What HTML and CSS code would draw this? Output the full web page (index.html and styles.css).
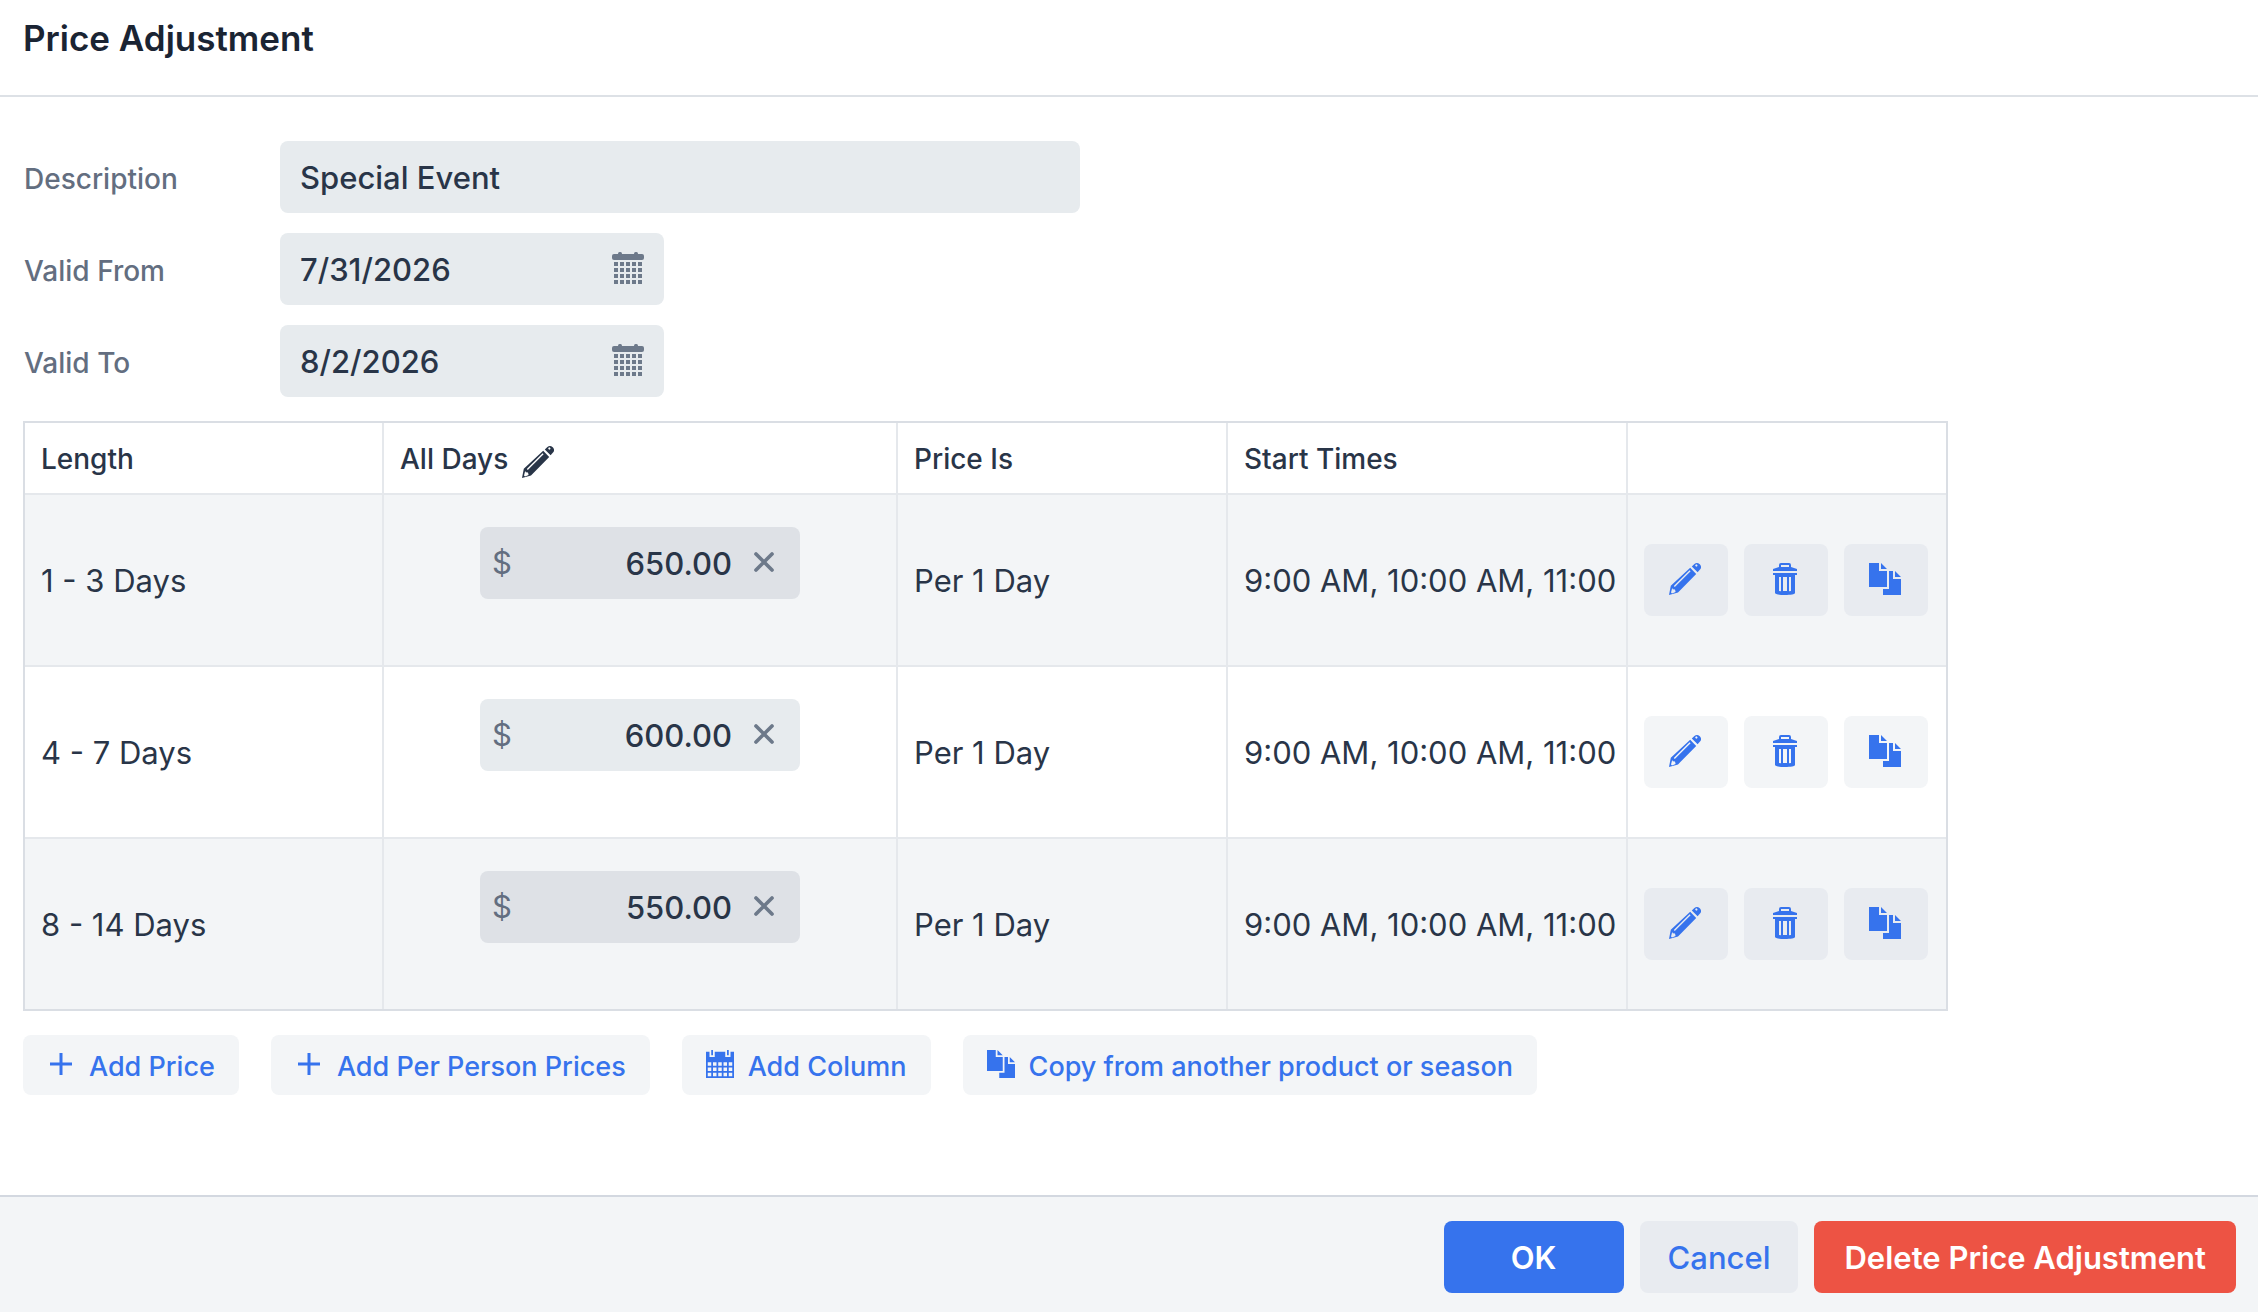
FILE: index.html
```
<!DOCTYPE html>
<html lang="en">
<head>
  <meta charset="UTF-8">
  <meta name="viewport" content="width=device-width, initial-scale=1">
  <title>Price Adjustment</title>
  <link rel="stylesheet" href="styles.css">
</head>
<body>
  <!-- Icon sprite -->
  <svg class="sprite" aria-hidden="true">
    <symbol id="icon-pencil" viewBox="0 0 16 16">
      <path fill-rule="evenodd" d="M11.4 1.7L12.7.5C13.4-.1 14.5-.2 15.2.5l.3.3c.7.8.7 1.8 0 2.5l-1.2 1.3zM13.3.9a.5.5 0 1 0 .8.7.5.5 0 0 0-.8-.7z"/>
      <path fill-rule="evenodd" d="M10.6 2.4l3 3.1L4.5 14.700 0 16l.9-4.600zM10.300 3.600L2.400 11.500l.5.5L10.800 4.100zM1.600 12.500L1 14.700l.5.5 1.800-.7-.3-1.200-1.100-.2z"/>
    </symbol>
    <symbol id="icon-trash" viewBox="0 0 16 16">
      <path fill-rule="evenodd" d="M2 3l3-1V1a1 1 0 0 1 1-1h4a1 1 0 0 1 1 1v1l3 1v1H2zM6 1v1h4V1z"/>
      <path fill-rule="evenodd" d="M2 5h12v1h-1v9c0 .6-2.200 1-5 1s-5-.4-5-1V6H2zm3 2v7l1 .1V7zm2 0v7h2V7zm3 0v7.100l1-.1V7z"/>
    </symbol>
    <symbol id="icon-copy" viewBox="0 0 16 16">
      <path d="M0 0h5v4h4v8H0zM6 0l3 3H6zM10 4h2v4h4v8H7v-3h3zM13 4l3 3h-3z"/>
    </symbol>
    <symbol id="icon-calendar" viewBox="0 0 16 16">
      <path d="M3 0h1v3H3zM12 0h1v3h-1z"/>
      <path fill-rule="evenodd" d="M0 1h2v3h3V1h6v3h3V1h2v15H0zM1 7v2h2V7zm3 0v2h2V7zm3 0v2h2V7zm3 0v2h2V7zm3 0v2h2V7zM1 10v2h2v-2zm3 0v2h2v-2zm3 0v2h2v-2zm3 0v2h2v-2zm3 0v2h2v-2zM1 13v2h2v-2zm3 0v2h2v-2zm3 0v2h2v-2zm3 0v2h2v-2zm3 0v2h2v-2z"/>
    </symbol>
    <symbol id="icon-plus" viewBox="0 0 28 28">
      <path d="M12.500 3h3v9.500H25v3h-9.500V25h-3v-9.500H3v-3h9.500z"/>
    </symbol>
    <symbol id="icon-cross" viewBox="0 0 20 20">
      <path d="M2 2l16 16M18 2L2 18" fill="none" stroke="currentColor" stroke-width="3.700" stroke-linecap="round"/>
    </symbol>
    <symbol id="icon-date" viewBox="0 0 32 32">
      <rect x="0" y="2" width="32" height="6" rx="2"/>
      <rect x="6" y="0" width="4" height="4" rx="1.500"/>
      <rect x="22" y="0" width="4" height="4" rx="1.500"/>
      <path d="M4 10v22M10 10v22M16 10v22M22 10v22M28 10v22" fill="none" stroke="currentColor" stroke-width="4" stroke-dasharray="4 2"/>
    </symbol>
  </svg>

  <div class="dialog">
    <header class="dialog-header">
      <h2>Price Adjustment</h2>
    </header>

    <main class="dialog-content">
      <div class="form">
        <label for="description">Description</label>
        <div class="field field-wide">
          <input type="text" id="description" value="Special Event">
        </div>

        <label for="valid-from">Valid From</label>
        <div class="field">
          <input type="text" id="valid-from" value="7/31/2026">
          <button class="field-button" aria-label="Choose start date"><svg class="icon-date"><use href="#icon-date"/></svg></button>
        </div>

        <label for="valid-to">Valid To</label>
        <div class="field">
          <input type="text" id="valid-to" value="8/2/2026">
          <button class="field-button" aria-label="Choose end date"><svg class="icon-date"><use href="#icon-date"/></svg></button>
        </div>
      </div>

      <table class="prices">
        <colgroup>
          <col class="col-length">
          <col class="col-price">
          <col class="col-unit">
          <col class="col-times">
          <col class="col-actions">
        </colgroup>
        <thead>
          <tr>
            <th>Length</th>
            <th>
              <div class="column-title">All Days
                <button class="header-button" aria-label="Edit column"><svg class="icon"><use href="#icon-pencil"/></svg></button>
              </div>
            </th>
            <th>Price Is</th>
            <th>Start Times</th>
            <th></th>
          </tr>
        </thead>
        <tbody>
          <tr>
            <td>1 - 3 Days</td>
            <td class="price-cell">
              <div class="field price-field">
                <span class="prefix">$</span>
                <input type="text" value="650.00" aria-label="Price for 1 - 3 days">
                <button class="field-button" aria-label="Clear"><svg class="icon-cross"><use href="#icon-cross"/></svg></button>
              </div>
            </td>
            <td>Per 1 Day</td>
            <td class="times">9:00 AM, 10:00 AM, 11:00</td>
            <td class="actions-cell">
              <div class="actions">
                <button class="btn btn-icon" aria-label="Edit"><svg class="icon"><use href="#icon-pencil"/></svg></button>
                <button class="btn btn-icon" aria-label="Delete"><svg class="icon"><use href="#icon-trash"/></svg></button>
                <button class="btn btn-icon" aria-label="Copy"><svg class="icon"><use href="#icon-copy"/></svg></button>
              </div>
            </td>
          </tr>
          <tr>
            <td>4 - 7 Days</td>
            <td class="price-cell">
              <div class="field price-field">
                <span class="prefix">$</span>
                <input type="text" value="600.00" aria-label="Price for 4 - 7 days">
                <button class="field-button" aria-label="Clear"><svg class="icon-cross"><use href="#icon-cross"/></svg></button>
              </div>
            </td>
            <td>Per 1 Day</td>
            <td class="times">9:00 AM, 10:00 AM, 11:00</td>
            <td class="actions-cell">
              <div class="actions">
                <button class="btn btn-icon" aria-label="Edit"><svg class="icon"><use href="#icon-pencil"/></svg></button>
                <button class="btn btn-icon" aria-label="Delete"><svg class="icon"><use href="#icon-trash"/></svg></button>
                <button class="btn btn-icon" aria-label="Copy"><svg class="icon"><use href="#icon-copy"/></svg></button>
              </div>
            </td>
          </tr>
          <tr>
            <td>8 - 14 Days</td>
            <td class="price-cell">
              <div class="field price-field">
                <span class="prefix">$</span>
                <input type="text" value="550.00" aria-label="Price for 8 - 14 days">
                <button class="field-button" aria-label="Clear"><svg class="icon-cross"><use href="#icon-cross"/></svg></button>
              </div>
            </td>
            <td>Per 1 Day</td>
            <td class="times">9:00 AM, 10:00 AM, 11:00</td>
            <td class="actions-cell">
              <div class="actions">
                <button class="btn btn-icon" aria-label="Edit"><svg class="icon"><use href="#icon-pencil"/></svg></button>
                <button class="btn btn-icon" aria-label="Delete"><svg class="icon"><use href="#icon-trash"/></svg></button>
                <button class="btn btn-icon" aria-label="Copy"><svg class="icon"><use href="#icon-copy"/></svg></button>
              </div>
            </td>
          </tr>
        </tbody>
      </table>

      <div class="toolbar">
        <button class="btn btn-small"><svg class="icon-small"><use href="#icon-plus"/></svg>Add Price</button>
        <button class="btn btn-small"><svg class="icon-small"><use href="#icon-plus"/></svg>Add Per Person Prices</button>
        <button class="btn btn-small"><svg class="icon-small"><use href="#icon-calendar"/></svg>Add Column</button>
        <button class="btn btn-small"><svg class="icon-small"><use href="#icon-copy"/></svg>Copy from another product or season</button>
      </div>
    </main>

    <footer class="dialog-footer">
      <button class="btn btn-primary">OK</button>
      <button class="btn">Cancel</button>
      <button class="btn btn-danger">Delete Price Adjustment</button>
    </footer>
  </div>
</body>
</html>
```
FILE: styles.css
```
* {
  box-sizing: border-box;
}

body {
  margin: 0;
  font-family: Inter, "Liberation Sans", sans-serif;
  font-size: 31px;
  line-height: 40px;
  color: #293548;
  background: #fff;
}

button,
input {
  margin: 0;
  padding: 0;
  border: none;
  background: none;
  font: inherit;
  color: inherit;
}

button {
  cursor: pointer;
}

svg {
  display: block;
  flex: none;
  fill: currentColor;
}

.sprite {
  position: absolute;
  width: 0;
  height: 0;
}

.icon {
  width: 32px;
  height: 32px;
}

.dialog {
  display: flex;
  flex-direction: column;
  min-height: 100vh;
}

.dialog-header {
  padding: 18px 23px 37px;
  border-bottom: 2px solid #dde1e6;
}

.dialog-header h2 {
  margin: 0;
  font-size: 35px;
  font-weight: 600;
  color: #1a2433;
}

.dialog-content {
  flex: 1;
  padding: 44px 23px;
}

/* Form */
.form {
  display: grid;
  grid-template-columns: 256px 1fr;
  row-gap: 20px;
  align-items: center;
  margin-bottom: 24px;
}

.form label {
  padding: 4px 1px 0;
  font-size: 28px;
  font-weight: 500;
  color: #636e80;
}

.form .field {
  margin-left: 1px;
}

.field {
  display: flex;
  align-items: center;
  width: 384px;
  height: 72px;
  padding: 0 20px;
  border-radius: 8px;
  background: #e7ebee;
  font-weight: 500;
}

.field-wide {
  width: 800px;
}

.field input {
  flex: 1;
  min-width: 0;
  padding-top: 2px;
  outline: none;
}

.field-button {
  padding-bottom: 2px;
  color: #6d798a;
}

.icon-date {
  width: 32px;
  height: 32px;
}

.icon-cross {
  width: 20px;
  height: 20px;
}

/* Price table */
.prices {
  width: 1925px;
  max-width: 100%;
  table-layout: fixed;
  border: 2px solid #dadee4;
  border-collapse: separate;
  border-spacing: 0;
}

.col-length { width: 359px; }
.col-price { width: 514px; }
.col-unit { width: 330px; }
.col-times { width: 400px; }

.prices th,
.prices td {
  padding: 2px 16px 0;
  border-right: 2px solid #e5e8ec;
  border-bottom: 2px solid #e5e8ec;
  text-align: left;
}

.prices th {
  height: 72px;
  font-size: 28px;
  font-weight: 500;
}

.prices td {
  height: 172px;
}

.prices th:last-child,
.prices td:last-child {
  border-right: none;
}

.prices tbody tr:last-child td {
  height: 170px;
  border-bottom: none;
}

.prices tbody tr:nth-child(odd) {
  background: #f3f5f7;
}

.prices .price-cell,
.prices .actions-cell {
  padding-top: 0;
}

.column-title {
  display: flex;
  align-items: center;
  gap: 14px;
}

.header-button {
  padding-top: 6px;
}

.price-cell .price-field {
  width: 320px;
  margin: 0 auto 34px;
  padding: 0 26px 0 12px;
}

.prices tr:nth-child(odd) .price-field {
  background: #dee1e6;
}

.price-field input {
  padding-right: 22px;
  text-align: right;
}

.prefix {
  font-weight: 400;
  color: #636e80;
}

.prices .times {
  padding-right: 0;
  white-space: nowrap;
  overflow: hidden;
}

.actions {
  display: flex;
  gap: 16px;
}

/* Buttons */
.btn {
  display: flex;
  align-items: center;
  justify-content: center;
  height: 72px;
  padding: 2px 28px 0;
  border-radius: 8px;
  background: #e8ebf0;
  font-weight: 500;
  color: #3673ed;
  white-space: nowrap;
}

.btn-icon {
  width: 84px;
  padding: 0 2px 2px 0;
}

.prices tr:nth-child(even) .btn-icon {
  background: #f3f5f7;
}

.toolbar {
  display: flex;
  flex-wrap: wrap;
  gap: 32px;
  margin-top: 24px;
}

.btn-small {
  gap: 14px;
  height: 60px;
  padding: 4px 24px 0;
  background: #f3f5f7;
  font-size: 27px;
}

.icon-small {
  width: 28px;
  height: 28px;
  margin-bottom: 6px;
}

.dialog-footer {
  display: flex;
  justify-content: flex-end;
  gap: 16px;
  padding: 24px 22px 19px;
  border-top: 2px solid #d3d8e0;
  background: #f3f5f7;
}

.btn-primary,
.btn-danger {
  padding: 2px 30px 0;
  font-weight: 600;
  color: #fff;
}

.btn-primary {
  min-width: 180px;
  background: #3673ed;
}

.btn-danger {
  background: #ed5344;
}
```
